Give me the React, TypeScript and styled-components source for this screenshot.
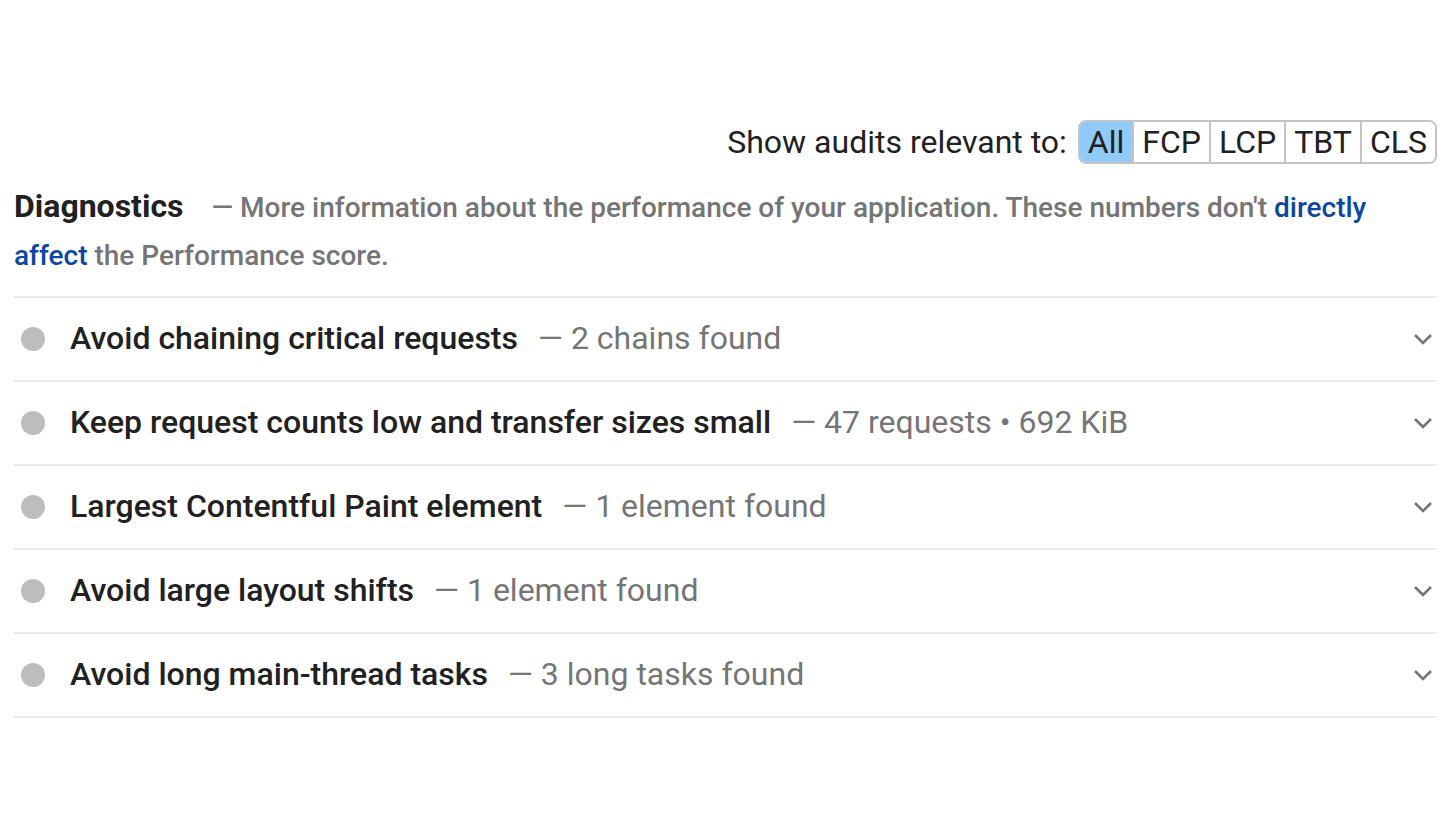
import React from "react";
import styled, { createGlobalStyle } from "styled-components";

const Global = createGlobalStyle`
  html, body { margin: 0; padding: 0; background: #fff; }
  body { font-family: Roboto, "Noto Sans", "Liberation Sans", sans-serif; color: #212121; }
`;

const Page = styled.div`
  padding: 120px 13px 0 13px;
`;

const FilterBar = styled.div`
  display: flex;
  justify-content: flex-end;
  align-items: center;
  gap: 11px;
`;

const FilterLabel = styled.span`
  font-size: 32px;
  color: #212121;
`;

const ButtonGroup = styled.div`
  display: flex;
  border: 2px solid #c4c4c4;
  border-radius: 8px;
  overflow: hidden;
  height: 40px;
`;

const FilterButton = styled.button<{ $active?: boolean }>`
  font-family: inherit;
  font-size: 32px;
  color: #212121;
  border: none;
  border-left: 2px solid #c4c4c4;
  background: ${(p) => (p.$active ? "#90caf9" : "#fff")};
  padding: 0 8px;
  height: 100%;
  display: flex;
  align-items: center;
  &:first-child { border-left: none; }
`;

const GroupHeader = styled.div`
  padding: 18px 0 16px 1px;
  border-bottom: 2px solid #ebebeb;
  line-height: 48px;
  font-size: 28px;
`;

const GroupTitle = styled.span`
  font-size: 32px;
  line-height: 48px;
  font-weight: 700;
  color: #212121;
  margin-right: 28px;
`;

const GroupDesc = styled.span`
  font-size: 28px;
  line-height: 48px;
  font-weight: 500;
  color: #757575;
`;

const Link = styled.a`
  color: #0d47a1;
  text-decoration: none;
`;

const Row = styled.div`
  display: flex;
  align-items: center;
  height: 82px;
  border-bottom: 2px solid #ebebeb;
  padding: 0 4px 0 8px;
`;

const Dot = styled.span`
  width: 24px;
  height: 24px;
  border-radius: 50%;
  background: #bdbdbd;
  flex: none;
  margin-right: 25px;
`;

const RowText = styled.div`
  flex: 1;
  font-size: 32px;
  white-space: nowrap;
  margin-top: -2px;
`;

const RowTitle = styled.span`
  font-weight: 500;
  color: #212121;
`;

const RowDisplay = styled.span`
  font-weight: 400;
  color: #757575;
  margin-left: 20px;
`;

const Chevron = styled.svg`
  width: 20px;
  height: 12px;
  flex: none;
`;

const audits = [
  { title: "Avoid chaining critical requests", value: "2 chains found" },
  { title: "Keep request counts low and transfer sizes small", value: "47 requests • 692 KiB" },
  { title: "Largest Contentful Paint element", value: "1 element found" },
  { title: "Avoid large layout shifts", value: "1 element found" },
  { title: "Avoid long main-thread tasks", value: "3 long tasks found" },
];

export default function App() {
  return (
    <Page>
      <Global />
      <FilterBar>
        <FilterLabel>Show audits relevant to:</FilterLabel>
        <ButtonGroup>
          <FilterButton $active>All</FilterButton>
          <FilterButton>FCP</FilterButton>
          <FilterButton>LCP</FilterButton>
          <FilterButton>TBT</FilterButton>
          <FilterButton>CLS</FilterButton>
        </ButtonGroup>
      </FilterBar>
      <GroupHeader>
        <GroupTitle>Diagnostics</GroupTitle>
        <GroupDesc>
          — More information about the performance of your application. These numbers don't{" "}
          <Link href="#">directly affect</Link> the Performance score.
        </GroupDesc>
      </GroupHeader>
      {audits.map((a) => (
        <Row key={a.title}>
          <Dot />
          <RowText>
            <RowTitle>{a.title}</RowTitle>
            <RowDisplay>— {a.value}</RowDisplay>
          </RowText>
          <Chevron viewBox="0 0 20 12">
            <path d="M2 2 L10 10 L18 2" fill="none" stroke="#757575" strokeWidth="2.6" />
          </Chevron>
        </Row>
      ))}
    </Page>
  );
}
